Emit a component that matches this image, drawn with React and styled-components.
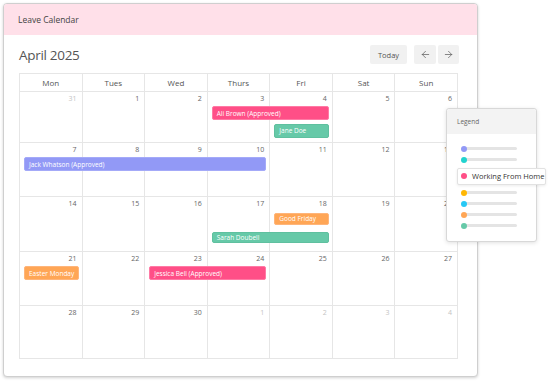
import React from "react";
import styled, { createGlobalStyle } from "styled-components";
import { ArrowLeft, ArrowRight } from "lucide-react";

const Global = createGlobalStyle`
  html, body { margin: 0; padding: 0; background: #fff; }
  body { font-family: "Open Sans", "Liberation Sans", sans-serif; }
  * { box-sizing: border-box; }
`;

const Page = styled.div`
  position: relative;
  width: 551px;
  height: 383px;
  padding: 3px 0 0 3px;
`;

const Card = styled.div`
  width: 475px;
  height: 374px;
  border: 1px solid #cfcfcf;
  border-radius: 4px;
  background: #fff;
  box-shadow: 0 1px 3px rgba(0, 0, 0, 0.18);
  overflow: hidden;
  display: flex;
  flex-direction: column;
`;

const CardHeader = styled.div`
  height: 31px;
  background: #ffe0e9;
  display: flex;
  align-items: center;
  padding-left: 14px;
  font-size: 8.5px;
  color: #444;
`;

const Body = styled.div`
  padding: 10px 18px 17px 15px;
  display: flex;
  flex-direction: column;
`;

const Toolbar = styled.div`
  height: 19px;
  display: flex;
  align-items: center;
  margin-bottom: 9px;
`;

const Month = styled.div`
  font-size: 13.5px;
  color: #555;
  flex: 1;
  letter-spacing: -0.3px;
`;

const Btn = styled.button`
  height: 19px;
  border: none;
  background: #f1f1f1;
  border-radius: 2px;
  padding: 0;
  display: flex;
  align-items: center;
  justify-content: center;
  color: #555;
  font-family: inherit;
  font-size: 7.5px;
  width: ${(p) => p.$w}px;
  margin-left: ${(p) => p.$ml || 0}px;
`;

const Grid = styled.div`
  width: 439px;
  border-top: 1px solid #e6e6e6;
  border-left: 1px solid #e6e6e6;
  display: flex;
  flex-direction: column;
`;

const HeadRow = styled.div`
  display: grid;
  grid-template-columns: repeat(7, 1fr);
  height: 18px;
`;

const HeadCell = styled.div`
  border-right: 1px solid #e6e6e6;
  border-bottom: 1px solid #e6e6e6;
  display: flex;
  align-items: center;
  justify-content: center;
  font-size: 8px;
  color: #555;
`;

const Week = styled.div`
  display: grid;
  grid-template-columns: repeat(7, 1fr);
  grid-template-rows: 10.5px 14px 14px 1fr;
  row-gap: 3.5px;
  height: ${(p) => p.$h}px;
`;

const DayCell = styled.div`
  grid-column: ${(p) => p.$col};
  grid-row: 1 / -1;
  border-right: 1px solid #e6e6e6;
  border-bottom: 1px solid #e6e6e6;
  display: flex;
  justify-content: flex-end;
  align-items: flex-start;
  padding: 2px 5px 0 0;
  font-size: 7px;
  line-height: 10px;
  color: ${(p) => (p.$other ? "#c4c4c4" : "#666")};
`;

const Event = styled.div`
  grid-column: ${(p) => p.$col} / span ${(p) => p.$span};
  grid-row: ${(p) => p.$row};
  margin: ${(p) => p.$top || 0}px 4px 0 4px;
  background: ${(p) => p.$color};
  border: 1px solid ${(p) => p.$border};
  border-radius: 2px;
  color: #fff;
  font-size: 6.5px;
  display: flex;
  align-items: center;
  padding-left: 4px;
  white-space: nowrap;
  overflow: hidden;
  z-index: 1;
`;

const Legend = styled.div`
  position: absolute;
  left: 446px;
  top: 108px;
  width: 91px;
  height: 134px;
  background: #fff;
  border: 1px solid #d8d8d8;
  border-radius: 3px;
  box-shadow: 0 1px 4px rgba(0, 0, 0, 0.12);
  display: flex;
  flex-direction: column;
`;

const LegendHead = styled.div`
  height: 25px;
  background: #f3f3f3;
  display: flex;
  align-items: center;
  padding-left: 10px;
  font-size: 6.5px;
  color: #666;
  border-radius: 3px 3px 0 0;
`;

const LegendList = styled.div`
  display: flex;
  flex-direction: column;
  padding: 9px 0 0 14px;
`;

const LegendRow = styled.div`
  height: 11px;
  display: flex;
  align-items: center;
`;

const Dot = styled.span`
  width: 6px;
  height: 6px;
  border-radius: 50%;
  background: ${(p) => p.$c};
  flex: none;
  position: relative;
  z-index: 1;
`;

const Line = styled.span`
  height: 3px;
  width: 53px;
  margin-left: -3px;
  border-radius: 2px;
  background: #e4e4e4;
`;

const Popup = styled.div`
  height: 17px;
  width: 89px;
  margin: 2.5px 0 2.5px -4px;
  background: #fff;
  border: 1px solid #e2e2e2;
  border-radius: 2px;
  box-shadow: 0 1px 3px rgba(0, 0, 0, 0.08);
  display: flex;
  align-items: center;
  padding-left: 3px;
  gap: 5px;
  font-size: 7.5px;
  color: #333;
  white-space: nowrap;
`;

const PINK = ["#ff4f87", "#ff7aa5"];
const GREEN = ["#66c9a8", "#5fc09f"];
const PURPLE = ["#9299f6", "#a4aaf8"];
const ORANGE = ["#ffa656", "#ffb57a"];

const weeks = [
  {
    h: 51,
    days: [[31, true], [1], [2], [3], [4], [5], [6]],
    events: [
      { t: "Ali Brown (Approved)", col: 4, span: 2, row: 2, c: PINK },
      { t: "Jane Doe", col: 5, span: 1, row: 3, c: GREEN },
    ],
  },
  {
    h: 54,
    days: [[7], [8], [9], [10], [11], [12], [13]],
    events: [{ t: "Jack Whatson (Approved)", col: 1, span: 4, row: 2, c: PURPLE }],
  },
  {
    h: 55,
    days: [[14], [15], [16], [17], [18], [19], [20]],
    events: [
      { t: "Good Friday", col: 5, span: 1, row: 2, c: ORANGE, top: 1.5 },
      { t: "Sarah Doubell", col: 4, span: 2, row: 3, c: GREEN, top: 3 },
    ],
  },
  {
    h: 54,
    days: [[21], [22], [23], [24], [25], [26], [27]],
    events: [
      { t: "Easter Monday", col: 1, span: 1, row: 2, c: ORANGE },
      { t: "Jessica Bell (Approved)", col: 3, span: 2, row: 2, c: PINK },
    ],
  },
  {
    h: 53,
    days: [[28], [29], [30], [1, true], [2, true], [3, true], [4, true]],
    events: [],
  },
];

const heads = ["Mon", "Tues", "Wed", "Thurs", "Fri", "Sat", "Sun"];

export default function App() {
  return (
    <>
      <Global />
      <Page>
        <Card>
          <CardHeader>Leave Calendar</CardHeader>
          <Body>
            <Toolbar>
              <Month>April 2025</Month>
              <Btn $w={37}>Today</Btn>
              <Btn $w={22} $ml={7}>
                <ArrowLeft size={11} strokeWidth={1.5} />
              </Btn>
              <Btn $w={21} $ml={2}>
                <ArrowRight size={11} strokeWidth={1.5} />
              </Btn>
            </Toolbar>
            <Grid>
              <HeadRow>
                {heads.map((h) => (
                  <HeadCell key={h}>{h}</HeadCell>
                ))}
              </HeadRow>
              {weeks.map((w, wi) => (
                <Week key={wi} $h={w.h}>
                  {w.days.map(([n, other], i) => (
                    <DayCell key={i} $col={i + 1} $other={other}>
                      {n}
                    </DayCell>
                  ))}
                  {w.events.map((e) => (
                    <Event
                      key={e.t}
                      $col={e.col}
                      $span={e.span}
                      $row={e.row}
                      $top={e.top}
                      $color={e.c[0]}
                      $border={e.c[1]}
                    >
                      {e.t}
                    </Event>
                  ))}
                </Week>
              ))}
            </Grid>
          </Body>
        </Card>
        <Legend>
          <LegendHead>Legend</LegendHead>
          <LegendList>
            <LegendRow>
              <Dot $c="#9299f6" />
              <Line />
            </LegendRow>
            <LegendRow>
              <Dot $c="#22d3cf" />
              <Line />
            </LegendRow>
            <Popup>
              <Dot $c="#ff4f87" />
              Working From Home
            </Popup>
            <LegendRow>
              <Dot $c="#ffb703" />
              <Line />
            </LegendRow>
            <LegendRow>
              <Dot $c="#27c8f5" />
              <Line />
            </LegendRow>
            <LegendRow>
              <Dot $c="#ffa656" />
              <Line />
            </LegendRow>
            <LegendRow>
              <Dot $c="#66c9a8" />
              <Line />
            </LegendRow>
          </LegendList>
        </Legend>
      </Page>
    </>
  );
}
